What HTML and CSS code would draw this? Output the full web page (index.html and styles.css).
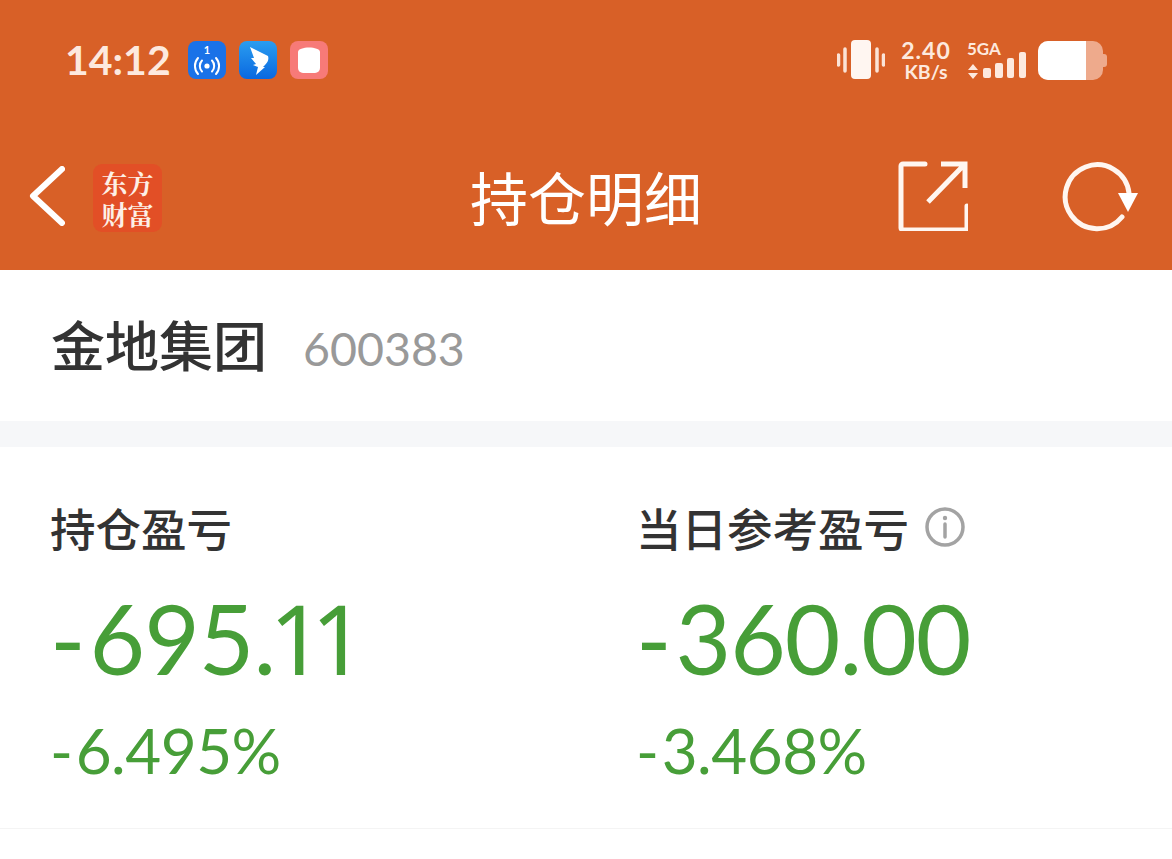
FILE: index.html
```html
<!DOCTYPE html>
<html lang="zh-CN">
<head>
<meta charset="utf-8">
<title>持仓明细</title>
<link rel="stylesheet" href="styles.css">
</head>
<body>
<header class="top">
  <div class="status">
    <div class="status-left">
      <span class="time">14:12</span>
      <svg class="app" viewBox="0 0 38 38"><rect width="38" height="38" rx="8" fill="#1a72e8"/><text x="19" y="13" class="app-num">1</text><circle cx="19" cy="25" r="2.600" fill="#fff"/><path d="M14 19.500a8 8 0 0 0 0 11M24 19.500a8 8 0 0 1 0 11M10 17a12 12 0 0 0 0 16M28 17a12 12 0 0 1 0 16" fill="none" stroke="#fff" stroke-width="2" stroke-linecap="round"/></svg>
      <svg class="app" viewBox="0 0 38 38"><defs><linearGradient id="dd" x1="0" y1="0" x2="0" y2="1"><stop offset="0" stop-color="#2a9df0"/><stop offset="1" stop-color="#0a68e0"/></linearGradient></defs><rect width="38" height="38" rx="8" fill="url(#dd)"/><path d="M11 6l18 9c1 3 0 6-3 9l-2 2h2l-9 8 2-8-5-2 3-1-5-6 3 0-4-11z" fill="#fff"/></svg>
      <svg class="app" viewBox="0 0 38 38"><rect width="38" height="38" rx="8" fill="#f77a78"/><path d="M8 11c0-6 22-6 22 0v16a5 5 0 0 1-5 5H13a5 5 0 0 1-5-5z" fill="#fff"/></svg>
    </div>
    <div class="status-right">
      <svg class="vibrate" viewBox="0 0 48 40"><rect x="14" y="0" width="20" height="39" rx="4" fill="#fff6f1"/><path d="M1.500 15v10M8 9v22M40 9v22M46.500 15v10" stroke="#fbe3d6" stroke-width="3.500" stroke-linecap="round"/></svg>
      <div class="speed"><span class="speed-num">2.40</span><span class="speed-unit">KB/s</span></div>
      <div class="signal">
        <span class="net">5GA</span>
        <svg class="bars" viewBox="0 0 60 23"><path d="M1 13l5-6 5 6zM1 16l5 6 5-6z" fill="#fde9de"/><rect x="16" y="11" width="8" height="10" rx="2" fill="#fde9de"/><rect x="28" y="6" width="8" height="15" rx="2" fill="#fde9de"/><rect x="40" y="1" width="7" height="20" rx="2" fill="#fde9de"/><rect x="52" y="-5" width="7" height="26" rx="2" fill="#fde9de"/></svg>
      </div>
      <div class="battery"><span class="battery-fill"></span><span class="battery-cap"></span></div>
    </div>
  </div>
  <nav class="nav">
    <div class="nav-left">
      <svg class="back" viewBox="0 0 36 60"><path d="M33 3L4 30l29 27" fill="none" stroke="#fff" stroke-width="6" stroke-linecap="round" stroke-linejoin="round"/></svg>
      <div class="brand"><span>东方</span><span>财富</span></div>
    </div>
    <h1 class="title">持仓明细</h1>
    <div class="nav-right">
      <svg class="share" viewBox="0 0 70 70"><path d="M27 3H5a2 2 0 0 0-2 2v62a2 2 0 0 0 2 2h62a2 2 0 0 0 2-2V45" fill="none" stroke="#fff6f0" stroke-width="5" stroke-linecap="round"/><path d="M30 41L66 4M43 3h24v24" fill="none" stroke="#fff6f0" stroke-width="5"/></svg>
      <svg class="refresh" viewBox="0 0 78 70"><path d="M61 55a32 32 0 1 1 7-24" fill="none" stroke="#fff6f0" stroke-width="5" stroke-linecap="round"/><path d="M57 31h20L67 50z" fill="#fff"/></svg>
    </div>
  </nav>
</header>
<main>
  <section class="stock">
    <span class="stock-name">金地集团</span>
    <span class="stock-code">600383</span>
  </section>
  <section class="pnl">
    <div class="pnl-col">
      <div class="pnl-label">持仓盈亏</div>
      <div class="pnl-value"><span class="dash">-</span>695.<span class="ones">11</span></div>
      <div class="pnl-pct"><span class="dash">-</span>6.495%</div>
    </div>
    <div class="pnl-col">
      <div class="pnl-label">当日参考盈亏
        <svg class="info" viewBox="0 0 40 40"><circle cx="20" cy="20" r="18" fill="none" stroke="#a3a3a3" stroke-width="3.500"/><circle cx="20" cy="11" r="2.200" fill="#a3a3a3"/><path d="M20 17v13" stroke="#a3a3a3" stroke-width="3.500" stroke-linecap="round"/></svg>
      </div>
      <div class="pnl-value"><span class="dash">-</span>360.00</div>
      <div class="pnl-pct"><span class="dash">-</span>3.468%</div>
    </div>
  </section>
</main>
</body>
</html>
```

FILE: styles.css
```css
* { box-sizing: border-box; }
html, body { margin: 0; padding: 0; }
body {
  width: 1172px;
  height: 859px;
  overflow: hidden;
  background: #fff;
  font-family: "Lato", "Noto Sans CJK SC", sans-serif;
}
.top { height: 270px; background: #d86027; }
.status {
  height: 120px;
  padding: 40px 69px 0 65px;
  display: flex;
  justify-content: space-between;
  align-items: flex-start;
}
.status-left { display: flex; align-items: center; height: 40px; }
.time {
  width: 123px;
  font-family: "Lato", sans-serif;
  font-size: 41px;
  font-weight: 700;
  line-height: 40px;
  color: #fde9de;
}
.app { width: 38px; height: 38px; margin-right: 13px; }
.app-num { fill: #fff; font-size: 11px; font-weight: 700; text-anchor: middle; font-family: "Lato", sans-serif; }
.status-right { display: flex; align-items: center; height: 40px; }
.vibrate { width: 48px; height: 40px; margin-right: 15px; }
.speed { display: flex; flex-direction: column; align-items: center; width: 52px; color: #fde9de; font-weight: 700; margin-right: 15px; }
.speed-num { font-size: 23px; line-height: 23px; letter-spacing: 1px; }
.speed-unit { font-size: 19.5px; line-height: 19px; }
.signal { display: flex; flex-direction: column; width: 60px; margin-right: 11px; }
.net { font-size: 17px; line-height: 17px; font-weight: 700; color: #fde9de; }
.bars { width: 60px; height: 23px; overflow: visible; }
.battery { position: relative; width: 65px; height: 39px; border-radius: 10px; background: #eeaa8c; }
.battery-fill { display: block; width: 48px; height: 39px; background: #fff; border-radius: 10px 0 0 10px; }
.battery-cap { position: absolute; right: -4px; top: 13px; width: 4px; height: 13px; border-radius: 0 3px 3px 0; background: #eeaa8c; }
.nav {
  position: relative;
  height: 150px;
  padding: 41px 33px 0 29px;
  display: flex;
  justify-content: space-between;
  align-items: flex-start;
}
.nav-left { display: flex; align-items: flex-start; }
.back { width: 36px; height: 60px; margin-top: 5px; }
.brand {
  width: 69px;
  height: 68px;
  margin-left: 28px;
  margin-top: 3px;
  border-radius: 9px;
  background: #e24f26;
  color: #fdf0e6;
  font-family: "Noto Serif CJK SC", "Noto Sans CJK SC", serif;
  font-size: 26px;
  line-height: 31px;
  font-weight: 700;
  display: flex;
  flex-direction: column;
  align-items: center;
  justify-content: center;
}
.title {
  position: absolute;
  left: 470px;
  top: 41px;
  margin: 0;
  font-size: 58px;
  line-height: 70px;
  font-weight: 400;
  color: #fff;
  font-family: "Noto Sans CJK SC", sans-serif;
}
.nav-right { display: flex; gap: 93px; align-items: flex-start; }
.share { width: 70px; height: 70px; }
.refresh { width: 78px; height: 70px; margin-top: 1px; }
.stock {
  height: 151px;
  padding: 41px 0 0 51px;
  display: flex;
  align-items: flex-start;
}
.stock-name { font-size: 54px; line-height: 66px; font-weight: 500; color: #333; font-family: "Noto Sans CJK SC", sans-serif; }
.stock-code { margin: 4px 0 0 36px; font-size: 46.5px; line-height: 66px; color: #999; font-family: "Lato", sans-serif; }
.pnl {
  height: 408px;
  border-top: 26px solid #f6f7f9;
  border-bottom: 1px solid #f4f4f4;
  display: flex;
  padding: 49px 0 0 51px;
}
.pnl-col { flex: none; width: 586px; }
.pnl-label {
  display: flex;
  align-items: center;
  gap: 16px;
  margin-left: -1px;
  font-size: 45.5px;
  line-height: 62px;
  font-weight: 500;
  color: #333;
  font-family: "Noto Sans CJK SC", sans-serif;
}
.info { width: 40px; height: 40px; }
.pnl-value {
  margin: 30px 0 0 -1px;
  font-size: 96px;
  line-height: 100px;
  letter-spacing: -1px;
  color: #479e38;
  font-family: "Lato", sans-serif;
}
.dash { margin-right: 0.05em; }
.ones { margin-left: -6px; font-family: "Noto Sans", sans-serif; letter-spacing: -13px; }
.pnl-pct {
  margin: 25px 0 0 -1px;
  font-size: 62px;
  line-height: 74px;
  letter-spacing: -0.5px;
  color: #479e38;
  font-family: "Lato", sans-serif;
}
```
